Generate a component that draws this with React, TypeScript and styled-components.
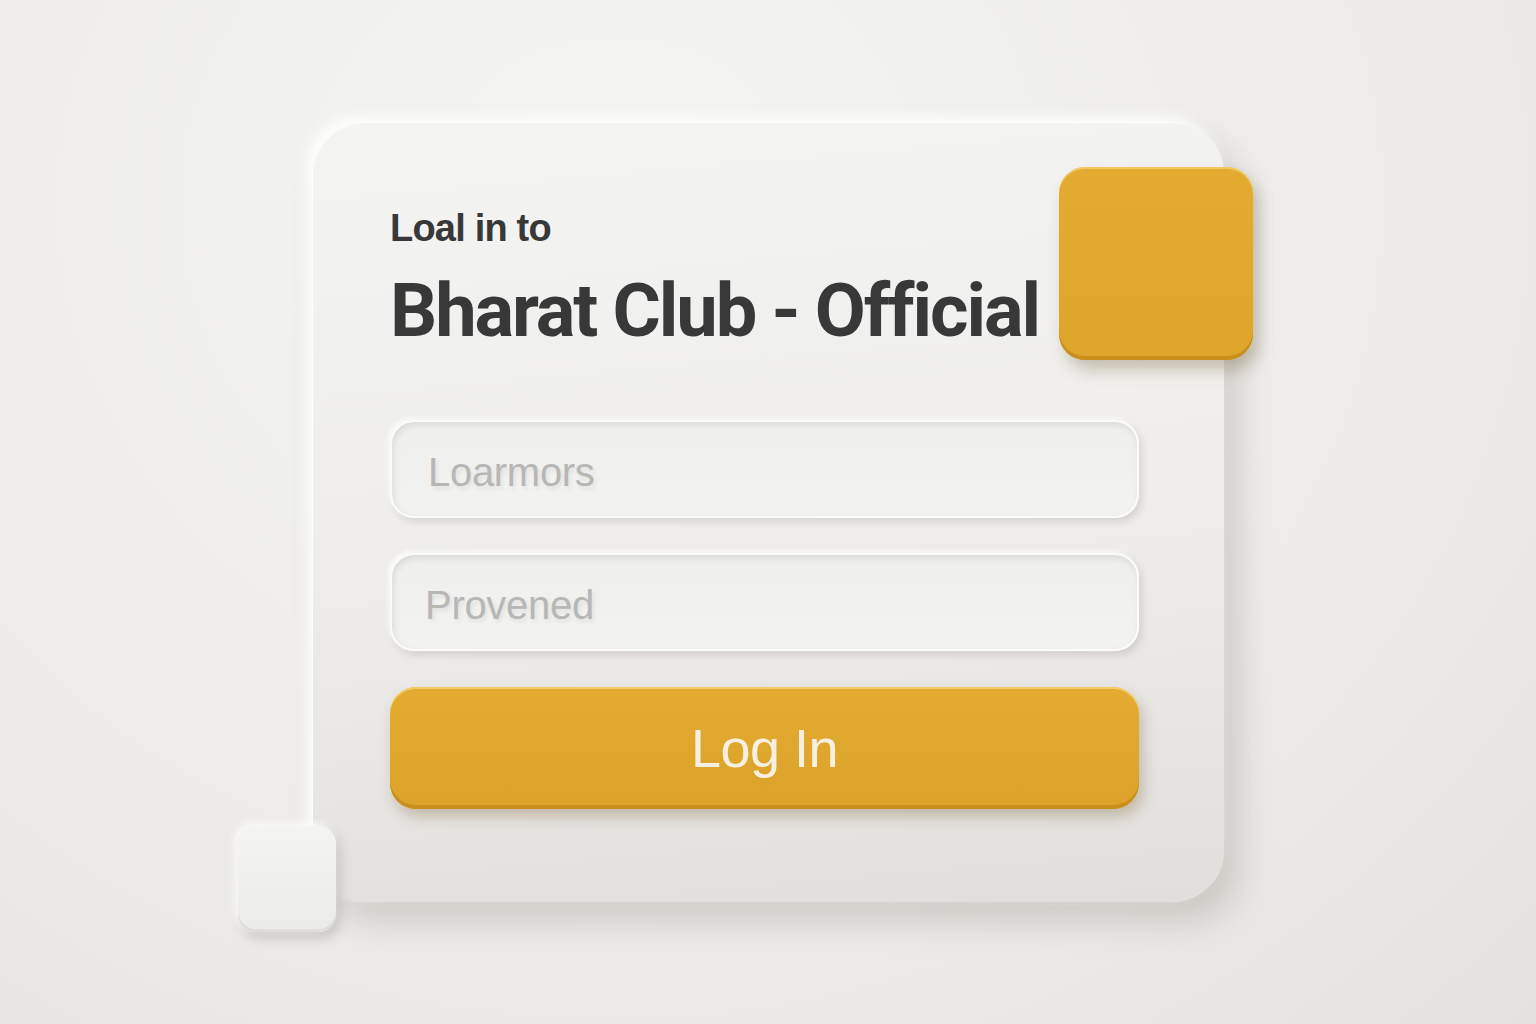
import React from "react"
import styled, { createGlobalStyle } from "styled-components"

const GlobalStyle = createGlobalStyle`
  html, body {
    margin: 0;
    padding: 0;
  }
  body {
    font-family: "Liberation Sans", Arial, sans-serif;
    background: radial-gradient(ellipse at 40% 20%, #f5f5f3 0%, #eeedeb 55%, #e4e2df 100%);
    min-height: 100vh;
  }
`

const colors = {
  yellow: "#e0a82d",
  yellowDark: "#c98f1c",
  ink: "#383838",
  placeholder: "#b7b7b6",
}

const Page = styled.div`
  width: 1536px;
  height: 1024px;
  display: flex;
  align-items: center;
  justify-content: center;
`

const Card = styled.div`
  position: relative;
  width: 912px;
  height: 780px;
  box-sizing: border-box;
  padding: 85px 84px 0 78px;
  border-radius: 52px;
  background: linear-gradient(175deg, #f4f4f2 0%, #efeeec 50%, #e1dfdc 100%);
  box-shadow:
    -6px -6px 14px rgba(255, 255, 255, 0.9),
    14px 18px 34px rgba(120, 112, 104, 0.28),
    inset 1px 1px 0 rgba(255, 255, 255, 0.9);
  display: flex;
  flex-direction: column;
`

const Eyebrow = styled.div`
  font-size: 38px;
  font-weight: 700;
  color: ${colors.ink};
  letter-spacing: -0.8px;
  line-height: 42px;
`

const Title = styled.h1`
  margin: 20px 0 0;
  font-family: Roboto, "Liberation Sans", Arial, sans-serif;
  font-size: 74px;
  font-weight: 700;
  color: ${colors.ink};
  letter-spacing: -2.1px;
  line-height: 84px;
  white-space: nowrap;
`

const Form = styled.div`
  margin-top: 67px;
  width: 749px;
  display: flex;
  flex-direction: column;
  gap: 35px;
`

const Field = styled.div<{ $indent: number }>`
  height: 98px;
  box-sizing: border-box;
  border-radius: 24px;
  background: linear-gradient(180deg, #efefed 0%, #f3f3f1 100%);
  border: 2px solid #fbfbfa;
  box-shadow:
    inset 2px 3px 6px rgba(150, 145, 138, 0.22),
    3px 4px 7px rgba(130, 120, 110, 0.22),
    -2px -2px 4px rgba(255, 255, 255, 0.9);
  display: flex;
  align-items: center;
  padding-left: ${(p) => p.$indent}px;
  padding-top: 6px;
  font-size: 40px;
  letter-spacing: -0.3px;
  color: ${colors.placeholder};
  text-shadow: 2px 3px 4px rgba(0, 0, 0, 0.08);
`

const Button = styled.button`
  margin-top: 1px;
  height: 122px;
  border: none;
  border-radius: 26px;
  background: linear-gradient(180deg, #e3ac30 0%, #dca22a 100%);
  box-shadow:
    inset 0 2px 0 rgba(255, 225, 140, 0.6),
    inset 0 -4px 0 ${colors.yellowDark},
    4px 8px 14px rgba(120, 90, 40, 0.3);
  font-family: "Liberation Sans", Arial, sans-serif;
  font-size: 54px;
  letter-spacing: -0.5px;
  color: #f7efe2;
  cursor: pointer;
`

const YellowTile = styled.div`
  position: absolute;
  top: 45px;
  right: -29px;
  width: 194px;
  height: 193px;
  border-radius: 26px;
  background: linear-gradient(180deg, #e3ab30 0%, #dea52b 100%);
  box-shadow:
    inset 0 2px 0 rgba(255, 220, 130, 0.6),
    inset 0 -4px 0 ${colors.yellowDark},
    6px 10px 16px rgba(110, 90, 50, 0.32);
`

const WhiteTile = styled.div`
  position: absolute;
  left: -74px;
  bottom: -30px;
  width: 98px;
  height: 106px;
  border-radius: 18px;
  background: linear-gradient(180deg, #f4f4f3 0%, #ebebea 100%);
  box-shadow:
    -3px -3px 8px rgba(255, 255, 255, 0.9),
    4px 6px 12px rgba(110, 104, 96, 0.28),
    inset 0 -3px 0 #dedddb;
`

const App = () => {
  return (
    <>
      <GlobalStyle />
      <Page>
        <Card>
          <Eyebrow>Loal in to</Eyebrow>
          <Title>Bharat Club - Official</Title>
          <Form>
            <Field $indent={36}>Loarmors</Field>
            <Field $indent={33}>Provened</Field>
            <Button>Log In</Button>
          </Form>
          <YellowTile />
          <WhiteTile />
        </Card>
      </Page>
    </>
  )
}

export default App
